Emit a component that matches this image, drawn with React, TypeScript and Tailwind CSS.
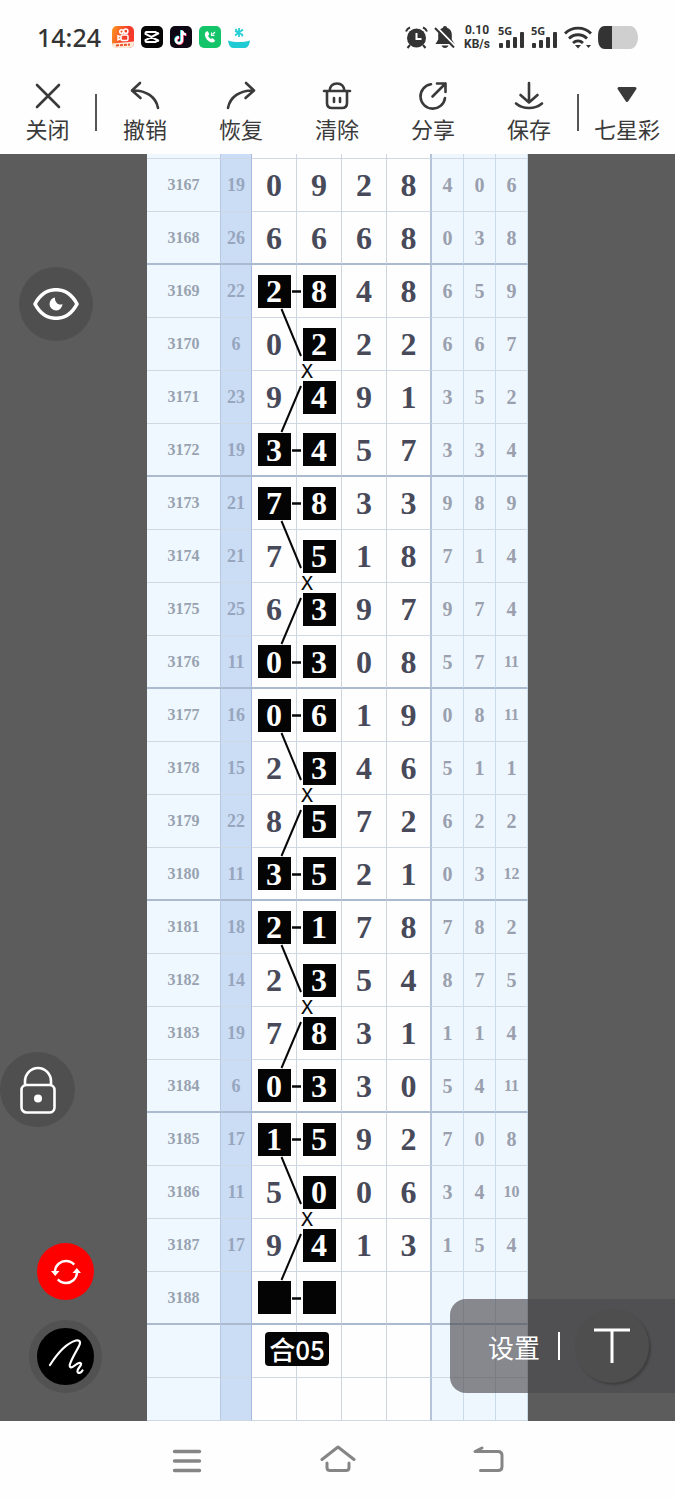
import type { ReactNode } from "react";

type Row = { issue: number; sum: string; main: string; tail: string[] };

const ROWS: Row[] = [
  { issue: 3167, sum: "19", main: "0928", tail: ["4", "0", "6"] },
  { issue: 3168, sum: "26", main: "6668", tail: ["0", "3", "8"] },
  { issue: 3169, sum: "22", main: "2848", tail: ["6", "5", "9"] },
  { issue: 3170, sum: "6", main: "0222", tail: ["6", "6", "7"] },
  { issue: 3171, sum: "23", main: "9491", tail: ["3", "5", "2"] },
  { issue: 3172, sum: "19", main: "3457", tail: ["3", "3", "4"] },
  { issue: 3173, sum: "21", main: "7833", tail: ["9", "8", "9"] },
  { issue: 3174, sum: "21", main: "7518", tail: ["7", "1", "4"] },
  { issue: 3175, sum: "25", main: "6397", tail: ["9", "7", "4"] },
  { issue: 3176, sum: "11", main: "0308", tail: ["5", "7", "11"] },
  { issue: 3177, sum: "16", main: "0619", tail: ["0", "8", "11"] },
  { issue: 3178, sum: "15", main: "2346", tail: ["5", "1", "1"] },
  { issue: 3179, sum: "22", main: "8572", tail: ["6", "2", "2"] },
  { issue: 3180, sum: "11", main: "3521", tail: ["0", "3", "12"] },
  { issue: 3181, sum: "18", main: "2178", tail: ["7", "8", "2"] },
  { issue: 3182, sum: "14", main: "2354", tail: ["8", "7", "5"] },
  { issue: 3183, sum: "19", main: "7831", tail: ["1", "1", "4"] },
  { issue: 3184, sum: "6", main: "0330", tail: ["5", "4", "11"] },
  { issue: 3185, sum: "17", main: "1592", tail: ["7", "0", "8"] },
  { issue: 3186, sum: "11", main: "5006", tail: ["3", "4", "10"] },
  { issue: 3187, sum: "17", main: "9413", tail: ["1", "5", "4"] },
  { issue: 3188, sum: "", main: "", tail: [] },
];

// every block of four issues starts at 4n + 1
function isMarked(issue: number, col: number) {
  if (issue < 3169) return false;
  if (col === 1) return true;
  return col === 0 && (issue % 4 === 1 || issue % 4 === 0);
}

function Connectors() {
  return (
    <svg
      className="absolute left-0 top-0 z-10 h-[212px] w-[90px] pointer-events-none"
      viewBox="0 0 90 212"
      fill="none"
      stroke="#080808"
      strokeWidth="2"
    >
      <path d="M40 26.5h9M40 185.5h9" strokeWidth="2.4" />
      <path d="M29.5 44L49 91M49 121L29.5 167" />
      <text
        x="55"
        y="113"
        textAnchor="middle"
        fill="#080808"
        stroke="none"
        className="font-['DejaVu_Sans_Mono',monospace] text-[20px] font-normal"
      >
        X
      </text>
    </svg>
  );
}

function TrendRow({
  row,
  height = "h-[53px]",
  thick = false,
  label,
}: {
  row?: Row;
  height?: string;
  thick?: boolean;
  label?: string;
}) {
  const line = thick ? "border-b-2 border-b-[#abbacf]" : "border-b border-b-[#cfd8e3]";
  const cell = `${height} ${line} p-0 text-center align-middle`;
  return (
    <tr>
      <td className={`${cell} border-r border-r-[#b9c7e6] bg-[#eff8fe] text-base text-[#98a2b0]`}>
        {row?.issue}
      </td>
      <td className={`${cell} border-r border-r-[#a9b8e0] bg-[#cbddf5] text-lg text-[#97a6bd]`}>{row?.sum}</td>
      {[0, 1, 2, 3].map((c) => {
        const digit = row?.main[c] ?? "";
        const marked = row ? isMarked(row.issue, c) : false;
        const edge = c === 3 ? "border-r-2 border-r-[#b5c3d8]" : "border-r border-r-[#cdd5df]";
        return (
          <td key={c} className={`${cell} ${edge} relative bg-[#fefeff] text-[32px] leading-8 text-[#484a5a]`}>
            {marked ? (
              <span className="mx-auto flex size-[33px] items-center justify-center bg-[#040404] text-white">
                {digit}
              </span>
            ) : (
              digit
            )}
            {marked && c === 0 && row!.issue % 4 === 1 && <Connectors />}
            {label && c === 0 && (
              <span className="absolute left-[13px] top-[7px] z-10 flex h-[34px] w-16 items-center justify-center rounded bg-[#040404] font-['Noto_Sans_CJK_SC',sans-serif] text-[26px] font-medium text-white">
                {label}
              </span>
            )}
          </td>
        );
      })}
      {[0, 1, 2].map((c) => {
        const value = row?.tail[c] ?? "";
        const size = value.length > 1 ? "text-base" : "text-xl";
        return (
          <td key={c} className={`${cell} ${size} border-r border-r-[#cbdae8] bg-[#eff7fe] text-[#9aa0ae]`}>
            {value}
          </td>
        );
      })}
    </tr>
  );
}

function TrendTable() {
  return (
    <table className="w-[381px] shrink-0 table-fixed border-separate border-spacing-0 font-['Liberation_Serif',serif] font-bold">
      <colgroup>
        <col className="w-[74px]" />
        <col className="w-[31px]" />
        <col className="w-[45px]" />
        <col className="w-[45px]" />
        <col className="w-[45px]" />
        <col className="w-[45px]" />
        <col className="w-8" />
        <col className="w-8" />
        <col className="w-8" />
      </colgroup>
      <tbody>
        <TrendRow height="h-[5px]" />
        {ROWS.map((row) => (
          <TrendRow key={row.issue} row={row} thick={row.issue % 4 === 0} />
        ))}
        <TrendRow label="合05" />
        <TrendRow height="h-[43px]" />
      </tbody>
    </table>
  );
}

function AppBadges() {
  return (
    <div className="flex items-center gap-[7px]">
      <svg className="size-[22px]" viewBox="0 0 22 22">
        <defs>
          <linearGradient id="kuai" x1="0" y1="0" x2="1" y2="0.3">
            <stop offset="0" stopColor="#ff9a1f" />
            <stop offset="0.7" stopColor="#f5392b" />
          </linearGradient>
        </defs>
        <rect width="22" height="22" rx="5" fill="url(#kuai)" />
        <g fill="none" stroke="#fff" strokeWidth="1.5">
          <circle cx="9.5" cy="5.6" r="1.8" />
          <circle cx="13.8" cy="5.2" r="2.1" />
          <rect x="9" y="9" width="7" height="5.5" rx="1.5" />
          <path d="M9 11L6 9.8v4L9 12.6" />
        </g>
        <path d="M0 17.5L22 15.5V17a5 5 0 0 1-5 5H5a5 5 0 0 1-5-4.5z" fill="#fde9d8" />
        <path d="M4 19.5l14-1" stroke="#e8552d" strokeWidth="2" strokeDasharray="3 1" />
      </svg>
      <svg className="size-[22px]" viewBox="0 0 22 22">
        <rect width="22" height="22" rx="5" fill="#050505" />
        <path
          d="M15.5 6H5.5a1 1 0 0 0-1 1v.8L18 15M15.5 16H5.5a1 1 0 0 1-1-1v-.8L18 7M15.5 6v1.5M15.5 16v-1.5"
          fill="none"
          stroke="#fff"
          strokeWidth="2"
        />
      </svg>
      <svg className="size-[22px]" viewBox="0 0 22 22">
        <rect width="22" height="22" rx="5" fill="#0d0714" />
        <g fill="none" strokeWidth="2.4">
          <path d="M11.3 4v9.8a3 3 0 1 1-3-3M11.3 4c.2 2.4 1.8 3.8 4 4" stroke="#27e5e8" />
          <path d="M12.7 5v9.8a3 3 0 1 1-3-3M12.7 5c.2 2.4 1.8 3.8 4 4" stroke="#f62c58" />
          <path d="M12 4.5v9.8a3 3 0 1 1-3-3M12 4.5c.2 2.4 1.8 3.8 4 4" stroke="#fff" />
        </g>
      </svg>
      <svg className="size-[22px]" viewBox="0 0 22 22">
        <rect width="22" height="22" rx="5" fill="#13c468" />
        <path
          d="M7.5 5.5c-2 1-2.2 3.8-.5 6.8 2 3.4 5.6 5 8 3.8 1-.6 1.3-1.5.7-2.1l-1.8-1.5c-.7-.5-1.3-.2-2 .4-1.5-.5-2.6-1.8-2.8-3.3.9-.5 1.1-1 .9-1.8l-.7-1.8c-.3-.8-1-.9-1.8-.5z"
          fill="#fff"
        />
        <path d="M12.5 6.5v3h3M13.5 8.5l2.5-2.5" fill="none" stroke="#fff" strokeWidth="1.2" />
      </svg>
      <svg className="size-[22px]" viewBox="0 0 22 22">
        <path d="M0 14.5c7 2 15 2 22 0-.5 4.5-2.5 7.5-5 7.5H5c-2.500 0-4.500-3-5-7.500z" fill="#21cbd3" />
        <path
          d="M11 2v9M7 5l8 4M15 3.5L7 9.5M7.5 3l2 3M14 8.5l.5 2"
          fill="none"
          stroke="#28cfd6"
          strokeWidth="1.8"
        />
      </svg>
    </div>
  );
}

function Signal() {
  return (
    <div className="flex w-[27px] flex-col text-[11px] font-bold leading-[10px]">
      <span>5G</span>
      <svg className="-mt-1 h-4 w-[27px]" viewBox="0 0 27 16" fill="#333">
        <rect x="1" y="11" width="4" height="5" rx="1" />
        <rect x="8" y="8" width="4" height="8" rx="1" />
        <rect x="15" y="5" width="4" height="11" rx="1" />
        <rect x="22" y="0" width="4" height="16" rx="1" />
      </svg>
    </div>
  );
}

function StatusBar() {
  return (
    <header className="flex h-[74px] items-center justify-between px-[37px] font-['Noto_Sans',sans-serif] text-[#333]">
      <div className="flex items-center gap-[11px]">
        <time className="text-[25px] font-medium leading-8">14:24</time>
        <AppBadges />
      </div>
      <div className="flex items-center gap-[6px]">
        <svg className="size-[23px]" viewBox="0 0 23 23" fill="none" stroke="#333" strokeWidth="2">
          <circle cx="11.5" cy="12" r="9.5" fill="#333" stroke="none" />
          <path d="M11.5 7v6h5" stroke="#fff" />
          <path d="M1 5.5C1.8 3.5 3 2.3 5 1.5M22 5.5C21.2 3.5 20 2.3 18 1.5M5 19l-2.5 3M18 19l2.5 3" />
        </svg>
        <svg className="size-[22px]" viewBox="0 0 22 22">
          <path
            d="M11 0c1.3 0 2 .8 2 1.8 3 .9 4.8 3.4 4.8 6.7v5l2.7 4.5H1.5L4.2 13.5v-5c0-3.3 1.8-5.8 4.8-6.7C9 .8 9.7 0 11 0zM7.5 19.5h7c-.6 1.6-1.8 2.5-3.5 2.5s-2.9-.9-3.500-2.500z"
            fill="#333"
          />
          <path d="M2.5 1L22 21" stroke="#fff" strokeWidth="2" />
          <path d="M1 2L20 21.5" stroke="#333" strokeWidth="2" />
        </svg>
        <div className="flex w-[30px] flex-col text-center font-['Roboto',sans-serif] text-xs font-bold leading-[14px]">
          <span>0.10</span>
          <span>KB/s</span>
        </div>
        <Signal />
        <Signal />
        <svg className="h-[23px] w-[28px]" viewBox="0 0 28 23" fill="none" stroke="#333" strokeWidth="2.8">
          <path d="M1 7.5C8 .3 20 .3 27 7.5M5 12.5c5-5 13-5 18 0M9 17c3-2.8 7-2.8 10 0" />
          <path d="M11 19h6l-3 3.5zM22 19h5l-2.5 3z" fill="#333" stroke="none" />
        </svg>
        <svg className="h-[23px] w-10" viewBox="0 0 40 23">
          <path d="M7 0H32C37 0 40 6 40 11.5S37 23 32 23H7C2 23 0 19 0 11.5S2 0 7 0z" fill="#cfcfcf" />
          <path d="M14 0H7C2 0 0 4 0 11.5S2 23 7 23h7z" fill="#333" />
        </svg>
      </div>
    </header>
  );
}

function Tool({ label, width = "flex-1", children }: { label: string; width?: string; children: ReactNode }) {
  return (
    <button type="button" className={`${width} flex flex-col items-center gap-[3px] pt-[7px]`}>
      <svg
        className="size-[30px]"
        viewBox="0 0 30 30"
        fill="none"
        stroke="#3a3a3a"
        strokeWidth="2.6"
        strokeLinecap="round"
        strokeLinejoin="round"
      >
        {children}
      </svg>
      <span className="text-[22px] leading-7">{label}</span>
    </button>
  );
}

function Toolbar() {
  return (
    <nav className="flex h-20 font-['Noto_Sans_CJK_SC',sans-serif] text-[#3a3a3a]">
      <Tool label="关闭" width="w-[95px]">
        <path d="M4 4l22 22M26 4L4 26" />
      </Tool>
      <div className="mt-5 h-[37px] w-[2px] bg-[#555]" />
      <Tool label="撤销">
        <path d="M10 2L2 9.5L10.5 17M2.5 9.5C16 9 26 16 28 27" />
      </Tool>
      <Tool label="恢复">
        <path d="M20 2l8 7.5L19.5 17M27.5 9.5C14 9 4 16 2 27" />
      </Tool>
      <Tool label="清除">
        <path d="M2 10h26M7.5 10C8 5 10.5 2.5 15 2.5S22 5 22.5 10M5 10v12c0 3.5 1.5 5 5 5h10c3.5 0 5-1.5 5-5V10M12 17v4M18 17v4" />
      </Tool>
      <Tool label="分享">
        <path d="M13 3.2A12.3 12.3 0 1 0 27 17M14.5 15.5L27.5 2.5M19 2.5h8.5V11" />
      </Tool>
      <Tool label="保存">
        <path d="M15 2v19M6.5 14l8.5 7.5L23.5 14M2 22.5c7 6 19 6 26 0" />
      </Tool>
      <div className="mt-5 h-[37px] w-[2px] bg-[#555]" />
      <Tool label="七星彩" width="w-24">
        <path d="M7 7.5h16L15 19.5z" fill="#3a3a3a" strokeWidth="3" />
      </Tool>
    </nav>
  );
}

function SideControls() {
  return (
    <aside className="flex flex-1 flex-col items-start pb-7 pt-[113px]">
      <button
        type="button"
        aria-label="显示"
        className="ml-[19px] flex size-[74px] items-center justify-center rounded-full bg-[#4f4f4f]"
      >
        <svg className="h-8 w-[46px]" viewBox="0 0 46 32" fill="none" stroke="#fff" strokeWidth="3.6" strokeLinejoin="round">
          <path d="M2 16C12-3 34-3 44 16 34 35 12 35 2 16z" />
          <path d="M22 9.5a6.5 6.5 0 1 0 7.5 6.5c-3.5 2-8-1.5-7.5-6.5z" fill="#fff" stroke="none" />
        </svg>
      </button>
      <button
        type="button"
        aria-label="锁定"
        className="mt-auto flex size-[75px] items-center justify-center rounded-full bg-[#4f4f4f]"
      >
        <svg className="h-12 w-9" viewBox="0 0 36 48" fill="none" stroke="#fff" strokeWidth="2.6">
          <rect x="1.5" y="19" width="33" height="27.5" rx="5" />
          <path d="M5 19v-3.5a13 13.5 0 0 1 26 0V19" />
          <circle cx="18" cy="32.5" r="4" fill="#fff" stroke="none" />
        </svg>
      </button>
      <button
        type="button"
        aria-label="切换"
        className="ml-[37px] mt-[116px] flex size-[57px] items-center justify-center rounded-full bg-[#ff0000]"
      >
        <svg className="h-[26px] w-[30px]" viewBox="0 0 30 26" fill="none" stroke="#fff" strokeWidth="2.4">
          <path d="M4 12C4.5 6 9.5 2 15 2c3.5 0 6 1.2 8.2 3.6M26 14c-.5 6-5.5 10-11 10-3.5 0-6-1.2-8.2-3.6" />
          <path d="M0 12h8.5l-4.3 5zM30 14h-8.5l4.3-5z" fill="#fff" stroke="none" />
        </svg>
      </button>
      <button
        type="button"
        aria-label="画笔"
        className="ml-[29px] mt-5 flex size-[73px] items-center justify-center rounded-full border-8 border-[#525252] bg-black"
      >
        <svg className="h-[37px] w-9" viewBox="0 0 36 37" fill="none" stroke="#fff" strokeWidth="2.2" strokeLinecap="round" strokeLinejoin="round">
          <path d="M2 27C9 16 19 5 28 2.5c4-1 5 2 3 5.5-3 6-7 12-9 18-1 3.5 1 4.5 4 2 3-2.5 6-4 7-2.5 1 2-4 5-3.5 8 .5 2.5 3.5 1.5 5-1" />
        </svg>
      </button>
    </aside>
  );
}

export default function App() {
  return (
    <div className="min-h-screen bg-[#fefefe]">
      <StatusBar />
      <Toolbar />
      <main className="relative flex bg-[#5c5c5c]">
        <SideControls />
        <TrendTable />
        <div className="flex-1" />
        <div className="absolute bottom-7 right-0 z-20 flex h-[94px] items-center rounded-l-2xl bg-[#49474c]/63 pl-[38px] pr-[26px] font-['Noto_Sans_CJK_SC',sans-serif] text-[26px] text-white">
          <button type="button">设置</button>
          <div className="ml-[18px] h-7 w-[2px] bg-white" />
          <button
            type="button"
            aria-label="文字"
            className="ml-[15px] flex size-[74px] items-center justify-center rounded-full bg-[#4e4e4e] shadow-[2px_2px_2px_#3f3f3f]"
          >
            <svg className="size-9" viewBox="0 0 36 36" fill="none" stroke="#fff" strokeWidth="3">
              <path d="M0 2h36M18 2v33" />
            </svg>
          </button>
        </div>
      </main>
      <footer className="flex h-[79px] items-center justify-center gap-[115px]">
        <button type="button" aria-label="菜单">
          <svg className="size-9" viewBox="0 0 36 36" fill="none" stroke="#858585" strokeWidth="3.4" strokeLinecap="round">
            <path d="M5.5 8.5h25M5.5 18h25M5.5 27.5h25" />
          </svg>
        </button>
        <button type="button" aria-label="主页">
          <svg className="size-9" viewBox="0 0 36 36" fill="none" stroke="#858585" strokeWidth="3" strokeLinecap="round" strokeLinejoin="round">
            <path d="M2 16.5L18 4l16 12.5M7 20v4.500c0 2 1 3 3 3h16c2 0 3-1 3-3V20" />
          </svg>
        </button>
        <button type="button" aria-label="返回">
          <svg className="size-9" viewBox="0 0 36 36" fill="none" stroke="#858585" strokeWidth="3" strokeLinecap="round" strokeLinejoin="round">
            <path d="M11 5L4 8.5h23c2.5 0 4 1.5 4 4v11c0 2.5-1.5 4-4 4H9.5" />
          </svg>
        </button>
      </footer>
    </div>
  );
}
